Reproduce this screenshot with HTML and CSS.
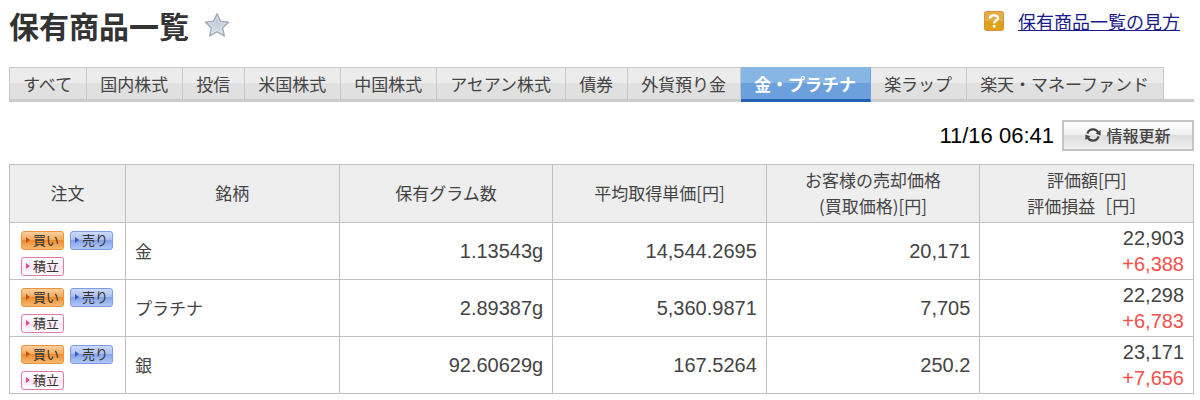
FILE: index.html
```html
<!DOCTYPE html>
<html lang="ja">
<head>
  <meta charset="utf-8">
  <title>保有商品一覧</title>
  <link rel="stylesheet" href="styles.css">
</head>
<body>
  <header class="page-header">
    <h1>保有商品一覧</h1>
    <button class="favorite" type="button" aria-label="お気に入り">
      <svg width="26" height="26" viewBox="0 0 26 26">
        <defs>
          <linearGradient id="star-fill" x1="0" y1="0" x2="0" y2="1">
            <stop offset="0" stop-color="#b2bfcb"/>
            <stop offset="1" stop-color="#d8e4ee"/>
          </linearGradient>
        </defs>
        <path d="M13 1.8 L16.4 9.4 L24.6 10.2 L18.5 15.8 L20.3 23.9 L13 19.8 L5.7 23.9 L7.5 15.8 L1.4 10.2 L9.6 9.4 Z" fill="url(#star-fill)" stroke="#a5b0ba" stroke-width="1.6" stroke-linejoin="round"/>
        <path d="M13 4.8 L15.4 10.6 L21.6 11.2 L17 15.4 L18.4 21.4 L13 18.3 L7.6 21.4 L9 15.4 L4.4 11.2 L10.6 10.6 Z" fill="none" stroke="#dde6ed" stroke-width="0.8"/>
      </svg>
    </button>
    <div class="help">
      <svg width="20" height="20" viewBox="0 0 20 20">
        <defs>
          <linearGradient id="help-fill" x1="0" y1="0" x2="0" y2="1">
            <stop offset="0.5" stop-color="#e5ad45"/>
            <stop offset="0.5" stop-color="#dca21c"/>
          </linearGradient>
        </defs>
        <rect x="0.5" y="0.5" width="19" height="19" rx="2" fill="url(#help-fill)" stroke="#e08c38"/>
        <path d="M6 7.4 C6 3.4 14 3.4 13.9 7.2 C13.8 9.6 10.2 9.4 10.2 12.6" fill="none" stroke="#fff" stroke-width="2.4"/>
        <rect x="8.9" y="14" width="2.6" height="2.6" fill="#fff"/>
      </svg>
      <a href="#">保有商品一覧の見方</a>
    </div>
  </header>

  <nav>
    <ul class="tabs">
      <li><a href="#">すべて</a></li>
      <li><a href="#">国内株式</a></li>
      <li><a href="#">投信</a></li>
      <li><a href="#">米国株式</a></li>
      <li><a href="#">中国株式</a></li>
      <li><a href="#">アセアン株式</a></li>
      <li><a href="#">債券</a></li>
      <li><a href="#">外貨預り金</a></li>
      <li><a href="#" class="active">金・プラチナ</a></li>
      <li><a href="#">楽ラップ</a></li>
      <li><a href="#">楽天・マネーファンド</a></li>
    </ul>
  </nav>

  <div class="toolbar">
    <time>11/16 06:41</time>
    <button class="refresh" type="button">
      <svg width="16" height="16" viewBox="0 0 16 16">
        <path d="M2.4 6.6 A5.9 5.9 0 0 1 13.2 5.4 M13.6 9.4 A5.9 5.9 0 0 1 2.8 10.6" fill="none" stroke="#444" stroke-width="2.2"/>
        <path d="M15.6 3 V8.4 L10.6 6.6 Z M0.4 13 V7.6 L5.4 9.4 Z" fill="#444"/>
      </svg>
      情報更新
    </button>
  </div>

  <table class="holdings">
    <thead>
      <tr>
        <th class="col-order">注文</th>
        <th>銘柄</th>
        <th>保有グラム数</th>
        <th>平均取得単価[円]</th>
        <th>お客様の売却価格<br>(買取価格)[円]</th>
        <th>評価額[円]<br>評価損益［円］</th>
      </tr>
    </thead>
    <tbody>
      <tr>
        <td>
          <div class="orders">
            <button class="order buy" type="button">買い</button>
            <button class="order sell" type="button">売り</button>
            <button class="order save" type="button">積立</button>
          </div>
        </td>
        <td>金</td>
        <td class="num">1.13543g</td>
        <td class="num">14,544.2695</td>
        <td class="num">20,171</td>
        <td class="num">22,903<br><span class="plus">+6,388</span></td>
      </tr>
      <tr>
        <td>
          <div class="orders">
            <button class="order buy" type="button">買い</button>
            <button class="order sell" type="button">売り</button>
            <button class="order save" type="button">積立</button>
          </div>
        </td>
        <td>プラチナ</td>
        <td class="num">2.89387g</td>
        <td class="num">5,360.9871</td>
        <td class="num">7,705</td>
        <td class="num">22,298<br><span class="plus">+6,783</span></td>
      </tr>
      <tr>
        <td>
          <div class="orders">
            <button class="order buy" type="button">買い</button>
            <button class="order sell" type="button">売り</button>
            <button class="order save" type="button">積立</button>
          </div>
        </td>
        <td>銀</td>
        <td class="num">92.60629g</td>
        <td class="num">167.5264</td>
        <td class="num">250.2</td>
        <td class="num">23,171<br><span class="plus">+7,656</span></td>
      </tr>
    </tbody>
  </table>
</body>
</html>
```
FILE: styles.css
```css
* {
  margin: 0;
  padding: 0;
  box-sizing: border-box;
}

body {
  padding: 1px 6px 0 9px;
  font-family: "Noto Sans CJK JP", sans-serif;
  font-size: 17px;
  line-height: 26px;
  color: #444;
  background: #fff;
}

button {
  font-family: inherit;
  cursor: pointer;
}

/* Title */
.page-header {
  display: flex;
  align-items: center;
  height: 48px;
}

h1 {
  font-size: 30px;
  line-height: 48px;
  color: #333;
}

.favorite {
  width: 26px;
  height: 26px;
  margin-left: 15px;
  border: none;
  background: none;
}

.favorite svg {
  display: block;
}

.help {
  display: flex;
  align-items: center;
  gap: 14px;
  margin: 0 14px 9px auto;
  font-size: 18px;
}

.help a {
  color: #1a1a8c;
}

/* Tabs */
.tabs {
  display: flex;
  margin-top: 18px;
  list-style: none;
  border-left: 1px solid #c8c8c8;
  box-shadow: inset 0 -3px #ccc;
}

.tabs a {
  display: block;
  height: 35px;
  padding: 0 14px 0 13px;
  line-height: 32px;
  color: #444;
  text-decoration: none;
  white-space: nowrap;
  background: linear-gradient(#ececec 50%, #e0e0e0 50%);
  border-top: 1px solid #c8c8c8;
  border-right: 1px solid #c8c8c8;
  border-bottom: 3px solid #ccc;
}

.tabs a.active {
  font-weight: bold;
  color: #fff;
  background: linear-gradient(#88b6e4 50%, #6ca0dc 50%);
  border-top-color: #88b6e4;
  border-right-color: #6ca0dc;
  border-bottom-color: #2360b4;
}

/* Update time */
.toolbar {
  display: flex;
  justify-content: flex-end;
  align-items: center;
  gap: 8px;
  margin: 18px 0 13px;
}

.toolbar time {
  font-family: "Liberation Sans", sans-serif;
  font-size: 22px;
  color: #000;
}

.refresh {
  display: flex;
  justify-content: center;
  align-items: center;
  gap: 5px;
  width: 132px;
  height: 31px;
  padding-bottom: 2px;
  font-size: 16px;
  font-weight: 500;
  line-height: 24px;
  color: #444;
  background: linear-gradient(#fff, #eee 50%, #ddd 50%, #f0f0f0);
  border: 2px solid #c4c4c4;
}

/* Holdings */
.holdings {
  width: 100%;
  table-layout: fixed;
  border-collapse: collapse;
}

.holdings th,
.holdings td {
  height: 57px;
  padding: 0 9px;
  border: 1px solid #c0c0c0;
}

.holdings th {
  height: 58px;
  padding-bottom: 2px;
  font-weight: normal;
  background: #eee;
}

.holdings .col-order {
  width: 116px;
}

.holdings .num {
  font-family: "Liberation Sans", sans-serif;
  font-size: 20px;
  text-align: right;
}

.plus {
  color: #f5504b;
}

.orders {
  display: flex;
  flex-wrap: wrap;
  gap: 7px 6px;
  padding: 5px 0 0 2px;
}

.order {
  display: flex;
  align-items: center;
  gap: 3px;
  width: 43px;
  height: 19px;
  padding: 0 0 1px 4px;
  font-size: 13px;
  line-height: 16px;
  color: #333;
  border: 1px solid;
  border-radius: 3px;
}

.order::before {
  content: "";
  border-left: 4px solid;
  border-top: 3px solid transparent;
  border-bottom: 3px solid transparent;
}

.buy {
  background: linear-gradient(#fbcf9c, #f5a655 50%, #ee8d2e 50%, #f8ba70);
  border-color: #eb9440;
}

.buy::before {
  border-left-color: #c4501c;
}

.sell {
  background: linear-gradient(#ccdaf8, #a9bcf0 50%, #86a3e8 50%, #b0c8f5);
  border-color: #809ce0;
}

.sell::before {
  border-left-color: #3a5cc0;
}

.save {
  background: linear-gradient(#fff, #fdf0f6 50%, #fbe2ef 50%, #fff);
  border-color: #e07aae;
}

.save::before {
  border-left-color: #dc4c94;
}
```
